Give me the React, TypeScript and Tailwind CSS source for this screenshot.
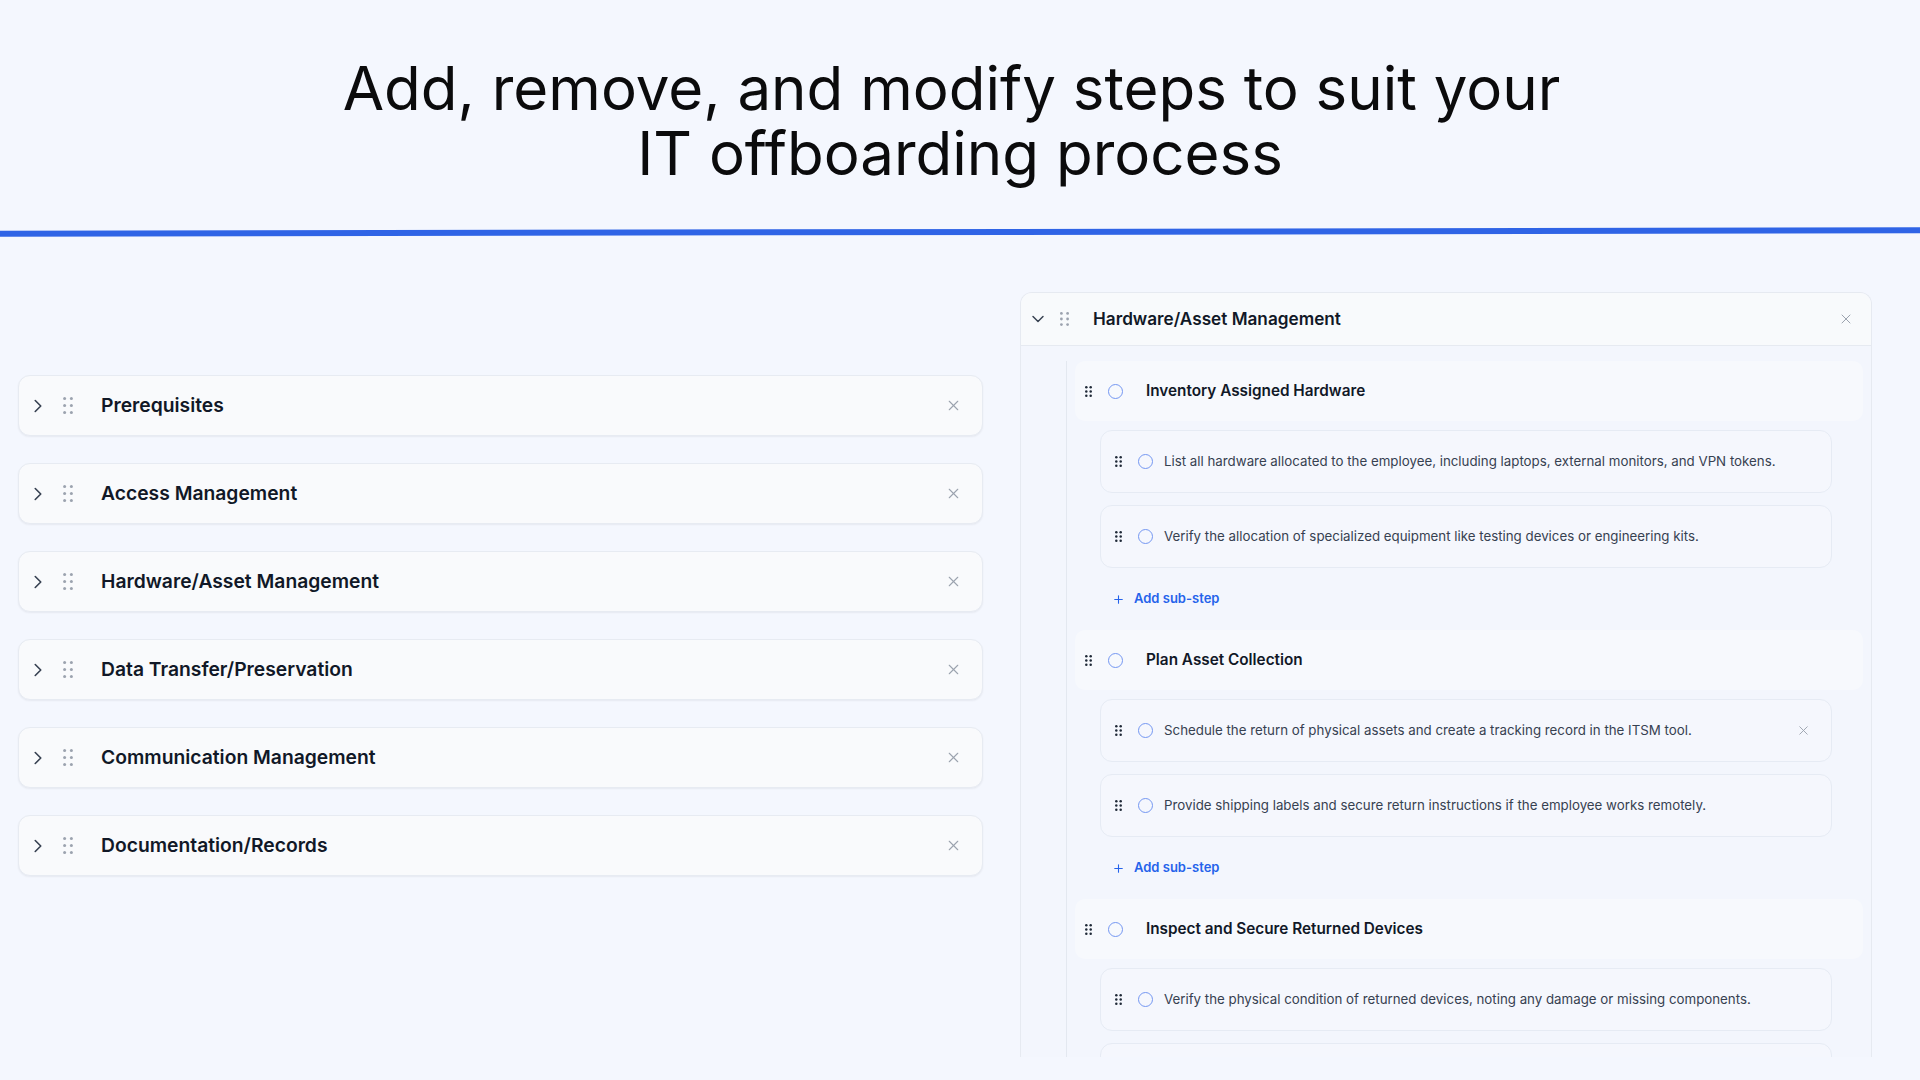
import React from 'react';
import { ChevronRight, ChevronDown, X, Plus } from 'lucide-react';

const sections = [
  'Prerequisites',
  'Access Management',
  'Hardware/Asset Management',
  'Data Transfer/Preservation',
  'Communication Management',
  'Documentation/Records',
];

const steps = [
  {
    title: 'Inventory Assigned Hardware',
    subs: [
      'List all hardware allocated to the employee, including laptops, external monitors, and VPN tokens.',
      'Verify the allocation of specialized equipment like testing devices or engineering kits.',
    ],
  },
  {
    title: 'Plan Asset Collection',
    subs: [
      'Schedule the return of physical assets and create a tracking record in the ITSM tool.',
      'Provide shipping labels and secure return instructions if the employee works remotely.',
    ],
    closable: 0,
  },
  {
    title: 'Inspect and Secure Returned Devices',
    subs: ['Verify the physical condition of returned devices, noting any damage or missing components.', ''],
    last: true,
  },
];

function Grip({ className = '' }: { className?: string }) {
  return (
    <svg width="10" height="17" viewBox="0 0 10 17" className={className} fill="currentColor">
      <circle cx="1.6" cy="1.6" r="1.5" />
      <circle cx="8.4" cy="1.6" r="1.5" />
      <circle cx="1.6" cy="8.5" r="1.5" />
      <circle cx="8.4" cy="8.5" r="1.5" />
      <circle cx="1.6" cy="15.4" r="1.5" />
      <circle cx="8.4" cy="15.4" r="1.5" />
    </svg>
  );
}

function SmallGrip() {
  return (
    <svg width="7" height="11" viewBox="0 0 7 11" className="shrink-0 text-[#1f2937]" fill="currentColor">
      <circle cx="1.3" cy="1.3" r="1.25" />
      <circle cx="5.7" cy="1.3" r="1.25" />
      <circle cx="1.3" cy="5.5" r="1.25" />
      <circle cx="5.7" cy="5.5" r="1.25" />
      <circle cx="1.3" cy="9.7" r="1.25" />
      <circle cx="5.7" cy="9.7" r="1.25" />
    </svg>
  );
}

function Ring() {
  return <span className="block h-[15px] w-[15px] shrink-0 rounded-full border-[1.5px] border-[#7497f2]" />;
}

function SectionCard({ name }: { name: string }) {
  return (
    <div className="flex h-[61px] items-center rounded-[12px] border border-[#e7ebf2] bg-[#f9fafc] pl-[8px] pr-[20px] shadow-[0_1px_2px_rgba(15,23,42,0.06)]">
      <ChevronRight size={22} strokeWidth={1.75} className="shrink-0 text-[#374151]" />
      <Grip className="ml-[14px] shrink-0 text-[#9ca3af]" />
      <span className="ml-[28px] text-[19.3px] font-semibold text-[#111827]">{name}</span>
      <X size={17} strokeWidth={1.5} className="ml-auto shrink-0 text-[#9ca3af]" />
    </div>
  );
}

function SubStep({ text, closable }: { text: string; closable?: boolean }) {
  return (
    <div className="flex h-[63px] items-center rounded-[12px] border border-[#e6ebf4] bg-[#f5f7fd] pl-[14px] pr-[20px]">
      {text && (
        <>
          <SmallGrip />
          <span className="ml-[16px]">
            <Ring />
          </span>
          <span className="ml-[11px] text-[13.3px] text-[#374151]">{text}</span>
        </>
      )}
      {closable && <X size={15} strokeWidth={1.5} className="ml-auto shrink-0 text-[#9ca3af]" />}
    </div>
  );
}

export default function App() {
  return (
    <div className="h-[1080px] w-full overflow-hidden bg-[#f4f7fe] font-['Inter','Noto_Sans',sans-serif]">
      <h1 className="pt-[56px] text-center text-[60px] font-normal leading-[65px] text-[#0b0b0c]">
        Add, remove, and modify steps to suit your{'\u00a0'}
        <br />
        IT offboarding process
      </h1>

      <div className="mt-[43px] h-[6px] w-full rotate-[-0.1deg] bg-[#2f64e6]" />

      <div className="mt-[57px] flex items-start gap-[37px] pl-[18px] pr-[48px]">
        <div className="mt-[83px] flex w-[965px] flex-col gap-[27px]">
          {sections.map((s) => (
            <SectionCard key={s} name={s} />
          ))}
        </div>

        <div className="h-[765px] w-[852px] overflow-hidden rounded-t-[12px] border border-b-0 border-[#e6eaf1] bg-[#f3f6fd]">
          <div className="flex h-[53px] items-center border-b border-[#e6eaf1] bg-[#f8fafc] pl-[7px] pr-[17px]">
            <ChevronDown size={20} strokeWidth={1.75} className="shrink-0 text-[#374151]" />
            <svg width="9" height="14" viewBox="0 0 9 14" className="ml-[12px] shrink-0 text-[#9ca3af]" fill="currentColor">
              <circle cx="1.4" cy="1.4" r="1.4" />
              <circle cx="7.6" cy="1.4" r="1.4" />
              <circle cx="1.4" cy="7" r="1.4" />
              <circle cx="7.6" cy="7" r="1.4" />
              <circle cx="1.4" cy="12.6" r="1.4" />
              <circle cx="7.6" cy="12.6" r="1.4" />
            </svg>
            <span className="ml-[24px] text-[17.2px] font-semibold text-[#111827]">Hardware/Asset Management</span>
            <X size={16} strokeWidth={1.5} className="ml-auto shrink-0 text-[#9ca3af]" />
          </div>

          <div className="pt-[15px]">
            <div className="ml-[45px] border-l border-[#e3e8f0]">
              {steps.map((step) => (
                <div key={step.title}>
                  <div className="mx-[8px] flex h-[60px] items-center rounded-[10px] bg-[#f7f9fd] pl-[10px]">
                    <SmallGrip />
                    <span className="ml-[16px]">
                      <Ring />
                    </span>
                    <span className="ml-[23px] text-[15.3px] font-semibold text-[#111827]">{step.title}</span>
                  </div>
                  <div className="ml-[33px] mr-[39px] mt-[9px] flex flex-col gap-[12px]">
                    {step.subs.map((t, i) => (
                      <SubStep key={i} text={t} closable={step.closable === i} />
                    ))}
                  </div>
                  {!step.last && (
                    <div className="flex h-[62px] items-center pl-[45px]">
                      <Plus size={13} strokeWidth={2} className="text-[#2563eb]" />
                      <span className="ml-[9px] text-[13px] font-semibold text-[#2563eb]">Add sub-step</span>
                    </div>
                  )}
                </div>
              ))}
            </div>
          </div>
        </div>
      </div>
    </div>
  );
}
